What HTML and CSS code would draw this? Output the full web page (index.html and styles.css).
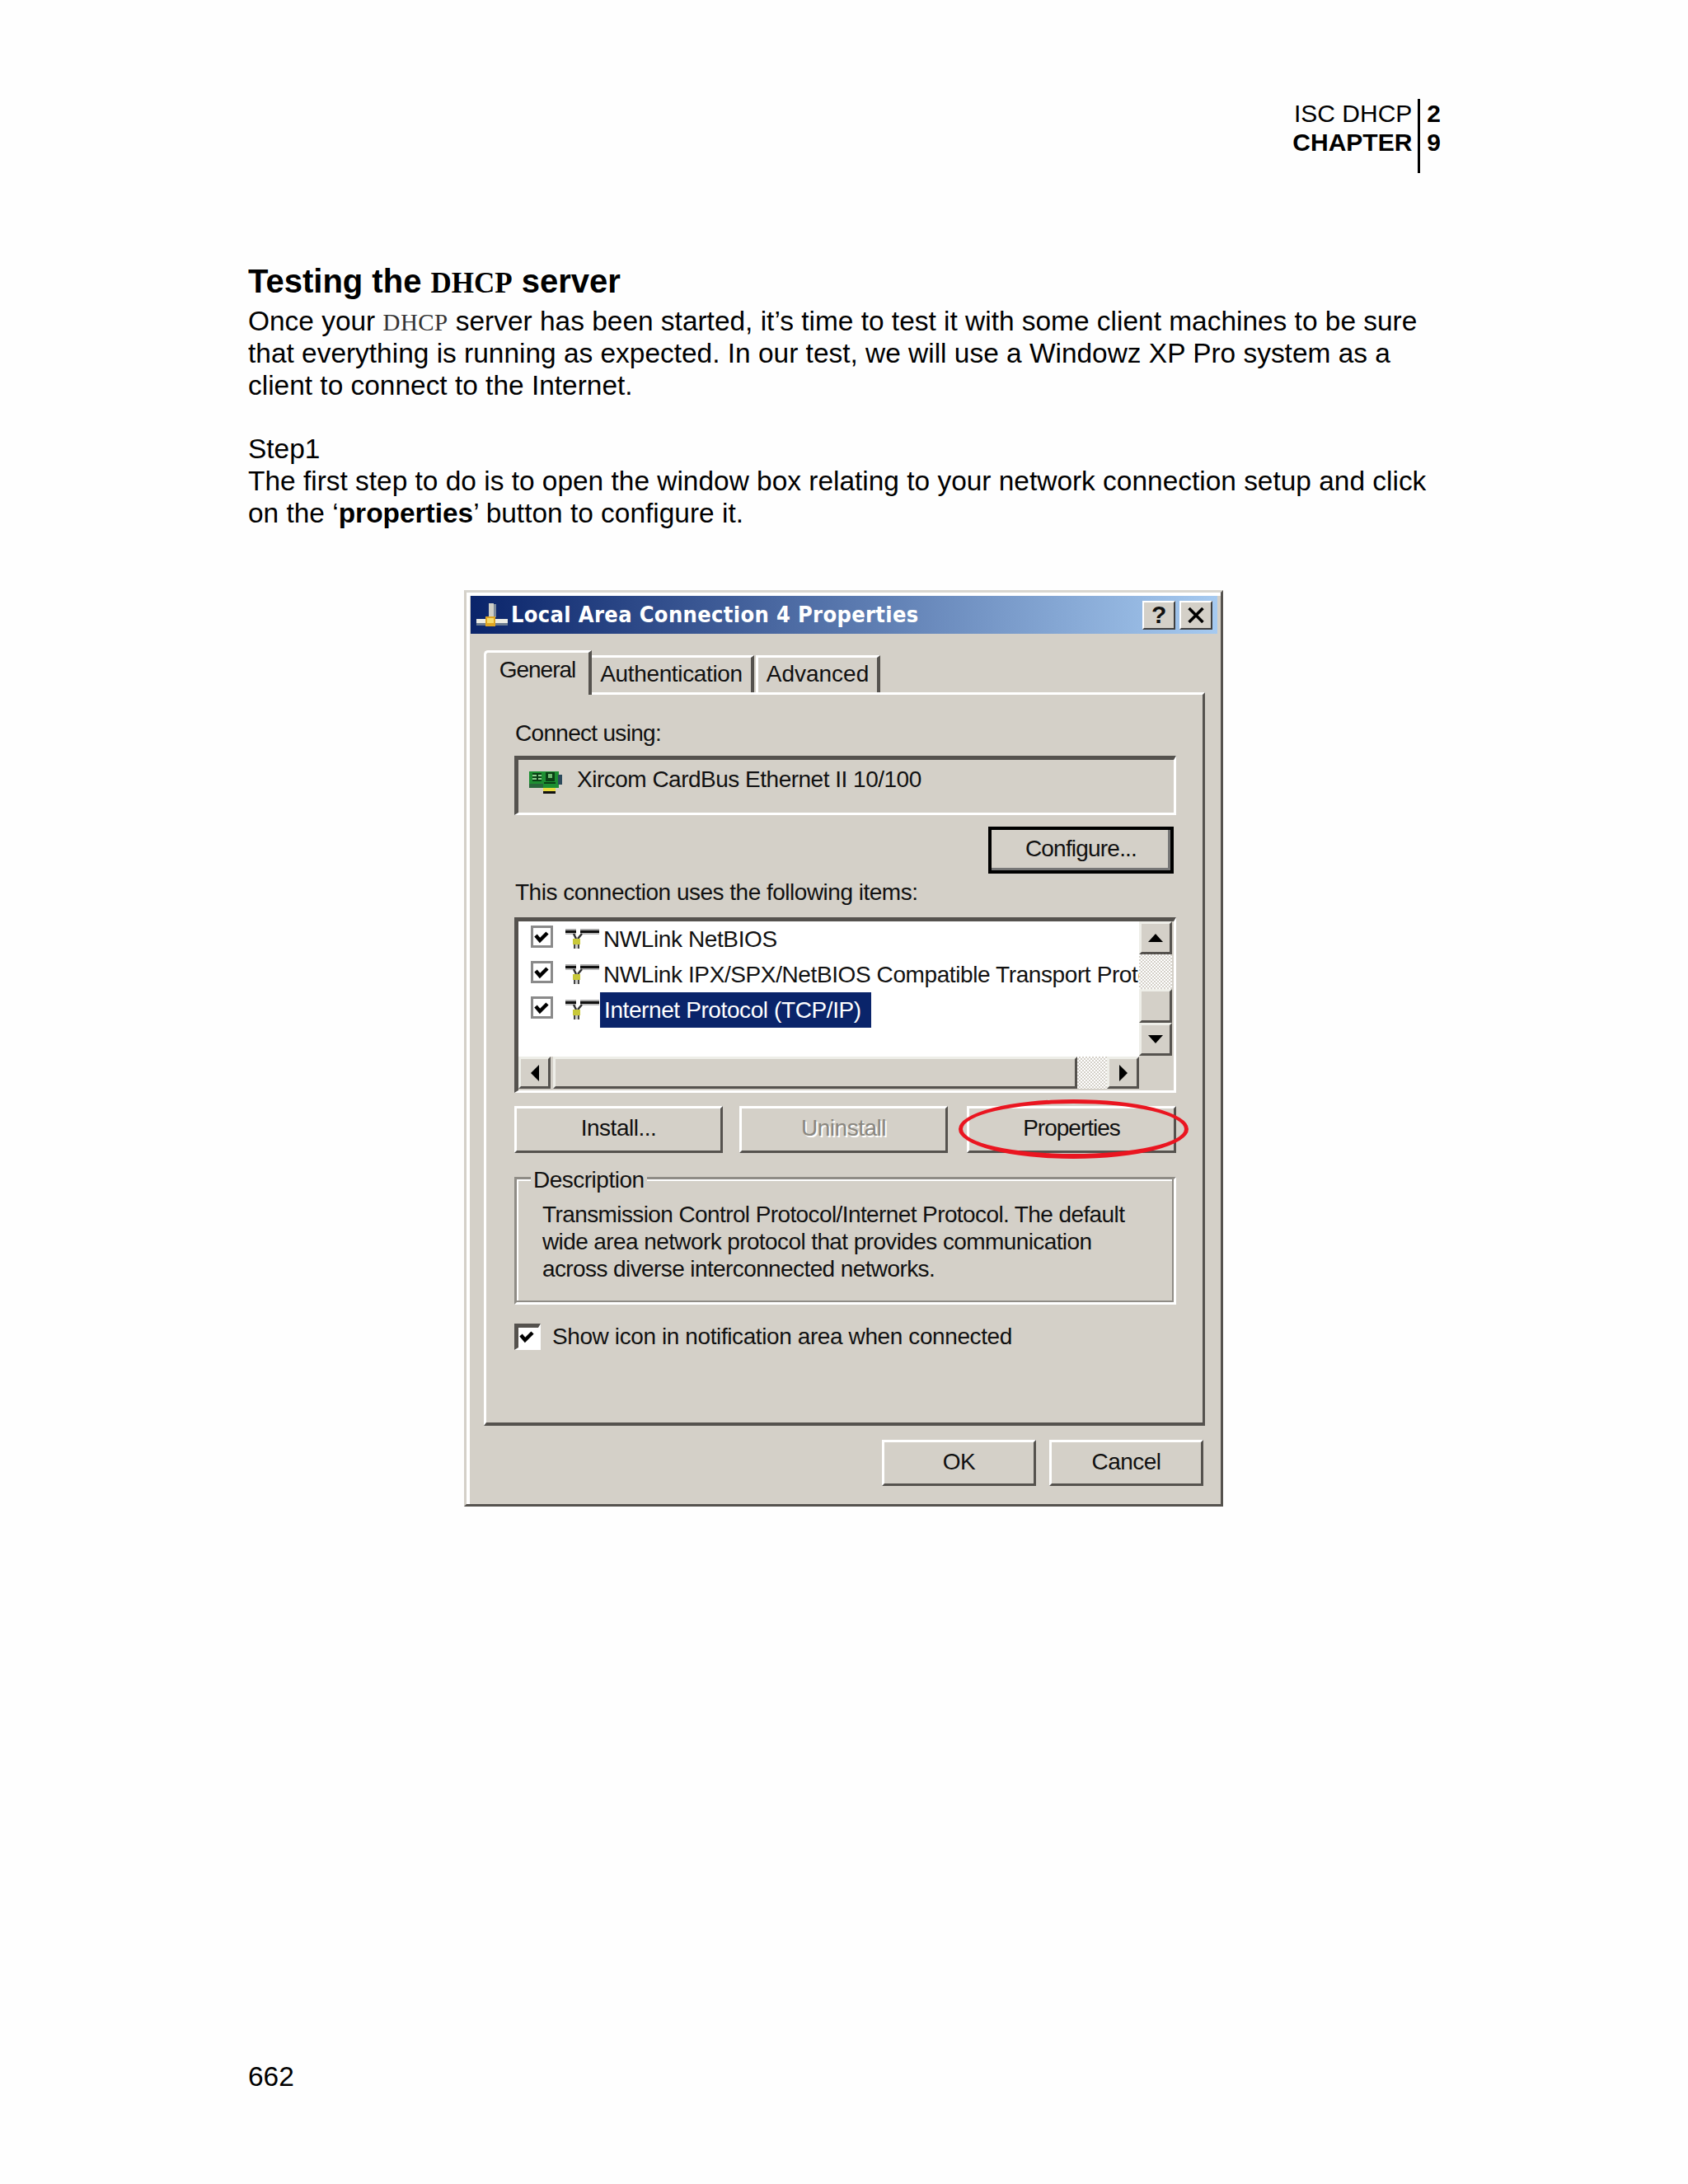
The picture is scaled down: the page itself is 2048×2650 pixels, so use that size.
FILE: index.html
```html
<!DOCTYPE html>
<html lang="en">
<head>
    <meta charset="UTF-8">
    <title>Testing the DHCP server</title>
    <link rel="stylesheet" href="styles.css">
</head>
<body>

<div class="page">
    <div class="running-head">
        <div class="head-titles">ISC DHCP<br><b>CHAPTER</b></div>
        <div class="head-bar"></div>
        <div class="head-nums"><b>2<br>9</b></div>
    </div>

    <h1>Testing the <code>DHCP</code> server</h1>
    <p>Once your <code>DHCP</code> server has been started, it&rsquo;s time to test it with some client machines to be sure<br>
    that everything is running as expected. In our test, we will use a Windowz XP Pro system as a<br>
    client to connect to the Internet.</p>
    <p class="step">Step1<br>
    The first step to do is to open the window box relating to your network connection setup and click<br>
    on the &lsquo;<b>properties</b>&rsquo; button to configure it.</p>

    <div class="dialog">
        <div class="titlebar">
            <svg class="title-icon" viewBox="0 0 42 32" shape-rendering="crispEdges">
                <rect x="23" y="1" width="3" height="16" fill="#7d8a9a"/>
                <rect x="17" y="0" width="6" height="17" fill="#cfcfc6"/>
                <rect x="2" y="24" width="38" height="3" fill="#6a7a90"/>
                <rect x="2" y="19" width="38" height="5" fill="#ecece4"/>
                <rect x="13" y="16" width="12" height="12" fill="#dfa522"/>
                <rect x="15" y="18" width="8" height="6" fill="#f8dc68"/>
            </svg>
            <span class="title-text">Local Area Connection 4 Properties</span>
            <div class="caption-btn">?</div>
            <div class="caption-btn close">
                <svg viewBox="0 0 20 18"><path d="M2 1 L18 17 M18 1 L2 17" stroke="#000" stroke-width="3.4" fill="none"/></svg>
            </div>
        </div>

        <div class="tabs">
            <div class="tab active">General</div>
            <div class="tab auth">Authentication</div>
            <div class="tab adv">Advanced</div>
        </div>

        <div class="panel">
            <div class="label connect-label">Connect using:</div>
            <div class="sunken adapter">
                <svg class="card-icon" viewBox="0 0 41 28" shape-rendering="crispEdges">
                    <rect x="1" y="1" width="36" height="20" fill="#1d8f32"/>
                    <rect x="1" y="16" width="17" height="5" fill="#27663a"/>
                    <rect x="5" y="3" width="11" height="2" fill="#0a4015"/>
                    <rect x="5" y="7" width="11" height="2" fill="#0a4015"/>
                    <rect x="5" y="11" width="11" height="2" fill="#0a4015"/>
                    <rect x="5" y="5" width="11" height="2" fill="#8fd090"/>
                    <rect x="5" y="9" width="11" height="2" fill="#8fd090"/>
                    <rect x="10" y="3" width="2" height="10" fill="#0a4015"/>
                    <rect x="21" y="2" width="11" height="11" fill="#0a4015"/>
                    <rect x="24" y="4" width="5" height="5" fill="#6dbb70"/>
                    <rect x="19" y="14" width="14" height="2" fill="#0a4015"/>
                    <rect x="36" y="5" width="5" height="12" fill="#2c4a5c"/>
                    <rect x="18" y="21" width="15" height="4" fill="#e8dc40"/>
                    <rect x="18" y="25" width="15" height="3" fill="#111"/>
                </svg>
                <span class="label">Xircom CardBus Ethernet II 10/100</span>
            </div>
            <div class="configure-row">
                <div class="btn default">Configure...</div>
            </div>
            <div class="label items-label">This connection uses the following items:</div>

            <div class="sunken listbox">
                <div class="list-main">
                    <div class="list-rows">
                        <div class="list-row">
                            <div class="checkbox"><svg viewBox="0 0 21 21"><path d="M3 9 L8 15 L17 6" stroke="#000" stroke-width="4.5" fill="none"/></svg></div>
                            <svg class="net-icon" viewBox="0 0 42 24"><use href="#net"/></svg>
                            <span class="item-text">NWLink NetBIOS</span>
                        </div>
                        <div class="list-row">
                            <div class="checkbox"><svg viewBox="0 0 21 21"><path d="M3 9 L8 15 L17 6" stroke="#000" stroke-width="4.5" fill="none"/></svg></div>
                            <svg class="net-icon" viewBox="0 0 42 24"><use href="#net"/></svg>
                            <span class="item-text">NWLink IPX/SPX/NetBIOS Compatible Transport Protocol</span>
                        </div>
                        <div class="list-row">
                            <div class="checkbox"><svg viewBox="0 0 21 21"><path d="M3 9 L8 15 L17 6" stroke="#000" stroke-width="4.5" fill="none"/></svg></div>
                            <svg class="net-icon" viewBox="0 0 42 24"><use href="#net"/></svg>
                            <span class="item-text selected">Internet Protocol (TCP/IP)</span>
                        </div>
                    </div>
                    <div class="hscroll">
                        <div class="sb-btn h"><svg viewBox="0 0 14 22"><path d="M12 1 V21 L2 11 Z"/></svg></div>
                        <div class="sb-thumb-h"></div>
                        <div class="sb-track-h"></div>
                        <div class="sb-btn h"><svg viewBox="0 0 14 22"><path d="M2 1 V21 L12 11 Z"/></svg></div>
                    </div>
                </div>
                <div class="vscroll">
                    <div class="sb-btn v"><svg viewBox="0 0 20 12"><path d="M1 11 H19 L10 1 Z"/></svg></div>
                    <div class="sb-track-v"></div>
                    <div class="sb-btn v thumb"></div>
                    <div class="sb-btn v"><svg viewBox="0 0 20 12"><path d="M1 1 H19 L10 11 Z"/></svg></div>
                </div>
            </div>

            <div class="action-row">
                <div class="btn">Install...</div>
                <div class="btn disabled">Uninstall</div>
                <div class="btn props">Properties
                    <div class="red-ring"></div>
                </div>
            </div>

            <div class="group">
                <span class="legend">Description</span>
                <div class="group-text">Transmission Control Protocol/Internet Protocol. The default<br>
                wide area network protocol that provides communication<br>
                across diverse interconnected networks.</div>
            </div>

            <div class="show-row">
                <div class="checkbox sunken-check"><svg viewBox="0 0 21 21"><path d="M3 9 L8 15 L17 6" stroke="#000" stroke-width="4.5" fill="none"/></svg></div>
                <span class="label show-label">Show icon in notification area when connected</span>
            </div>
        </div>

        <div class="dialog-buttons">
            <div class="btn">OK</div>
            <div class="btn">Cancel</div>
        </div>
    </div>

    <div class="page-number">662</div>
</div>

<svg class="defs" width="0" height="0">
    <defs>
        <g id="net" shape-rendering="crispEdges">
            <rect x="0" y="0" width="13" height="2" fill="#aaa"/>
            <rect x="0" y="2" width="13" height="3" fill="#111"/>
            <rect x="0" y="5" width="13" height="2" fill="#bbb"/>
            <rect x="18" y="0" width="23" height="2" fill="#aaa"/>
            <rect x="18" y="2" width="23" height="3" fill="#111"/>
            <rect x="18" y="5" width="23" height="2" fill="#bbb"/>
            <path d="M10 6 L13 12 M20 6 L15 12" stroke="#333" stroke-width="2.5" fill="none" shape-rendering="auto"/>
            <rect x="9" y="12" width="9" height="7" fill="#c8c83a"/>
            <rect x="10" y="19" width="2" height="5" fill="#444"/>
            <rect x="12" y="19" width="3" height="5" fill="#ccc"/>
            <rect x="15" y="19" width="2" height="5" fill="#444"/>
        </g>
    </defs>
</svg>

</body>
</html>
```

FILE: styles.css
```css
body {
    margin: 0;
    background-color: #fefefe;
    font-family: "Liberation Sans", Arial, sans-serif;
    color: #000;
}
.page {
    box-sizing: border-box;
    width: 2048px;
    height: 2650px;
    padding: 120px 0 0 301px;
    font-size: 33.45px;
    line-height: 39px;
}
.defs {
    position: absolute;
}

/* running head */
.running-head {
    display: flex;
    justify-content: flex-end;
    height: 90px;
    padding-right: 300px;
    font-size: 30px;
    line-height: 35px;
}
.head-titles {
    text-align: right;
}
.head-bar {
    width: 3px;
    background: #000;
    margin: 0 8px 0 7px;
}

h1 {
    margin: 108px 0 0 0;
    font-size: 40px;
    line-height: 46px;
    font-weight: bold;
}
h1 code {
    font-family: "Liberation Serif", serif;
    font-size: 35px;
    line-height: 0;
}
p {
    margin: 6px 0 0 0;
}
p code {
    font-family: "Liberation Serif", serif;
    font-size: 29px;
    letter-spacing: 0.4px;
    line-height: 0;
    color: #333;
}
.step {
    margin-top: 38px;
}

/* dialog */
.dialog {
    box-sizing: border-box;
    width: 921px;
    height: 1112px;
    margin: 74px 0 0 262px;
    padding: 4px 0 0 5px;
    background: #d4d0c8;
    border: 3px solid;
    border-color: #d8d6d0 #55524e #55524e #d4d0c8;
    box-shadow: inset 4px 4px 0 #fff;
    font-size: 28px;
    line-height: 34px;
    letter-spacing: -0.5px;
    color: #111;
}
.titlebar {
    display: flex;
    align-items: center;
    height: 46px;
    margin-right: 4px;
    padding: 0 6px 0 5px;
    background: linear-gradient(90deg, #0a246a, #a6caf0);
}
.title-icon {
    width: 42px;
    height: 32px;
    margin-top: 4px;
}
.title-text {
    flex: 1;
    margin-left: 2px;
    color: #fff;
    font-family: "DejaVu Sans Condensed", "DejaVu Sans", sans-serif;
    font-weight: bold;
    font-size: 27px;
    letter-spacing: 0.35px;
}
.caption-btn {
    box-sizing: border-box;
    display: flex;
    align-items: center;
    justify-content: center;
    width: 40px;
    height: 35px;
    margin-left: 5px;
    background: #d4d0c8;
    border: 2px solid;
    border-color: #fff #404040 #404040 #fff;
    font-weight: bold;
    font-size: 30px;
}
.caption-btn svg {
    width: 22px;
    height: 19px;
}

/* tabs */
.tabs {
    display: flex;
    align-items: flex-end;
    height: 71px;
    margin-left: 16px;
}
.tab {
    box-sizing: border-box;
    height: 45px;
    padding: 3px 0 0 0;
    text-align: center;
    border-top: 3px solid #fff;
    border-left: 3px solid #fff;
    border-right: 4px solid #55524e;
}
.tab.active {
    position: relative;
    z-index: 1;
    width: 131px;
    height: 54px;
    margin-bottom: -3px;
    padding-top: 4px;
    border-top-left-radius: 5px;
    background: #d4d0c8;
    letter-spacing: -1px;
}
.tab.auth {
    width: 197px;
    border-left: none;
    letter-spacing: -0.35px;
}
.tab.adv {
    width: 151px;
    margin-left: 2px;
    letter-spacing: 0;
}

.panel {
    box-sizing: border-box;
    width: 875px;
    height: 890px;
    margin-left: 16px;
    padding: 30px 32px 0 34px;
    border: 3px solid;
    border-color: #fff #55524e #55524e #fff;
    border-bottom-width: 4px;
}
.label {
    white-space: nowrap;
}
.connect-label {
    height: 44px;
    padding-left: 1px;
    letter-spacing: -0.7px;
}
.sunken {
    box-sizing: border-box;
    border: 3px solid;
    border-color: #55524e #fff #fff #55524e;
    border-top-width: 5px;
    border-left-width: 5px;
}
.adapter {
    display: flex;
    align-items: flex-start;
    width: 803px;
    height: 72px;
    padding: 7px 0 0 12px;
}
.card-icon {
    width: 41px;
    height: 28px;
    margin: 6px 18px 0 0;
}
.configure-row {
    display: flex;
    justify-content: flex-end;
    margin: 14px 3px 0 0;
}
.btn {
    box-sizing: border-box;
    display: flex;
    align-items: center;
    justify-content: center;
    height: 57px;
    padding-bottom: 3px;
    background: #d4d0c8;
    border: 3px solid;
    border-color: #fff #55524e #55524e #fff;
}
.btn.default {
    width: 225px;
    border: 4px solid #000;
    box-shadow: inset -3px -3px 0 #777;
    letter-spacing: -0.8px;
}
.items-label {
    margin-top: 6px;
    height: 47px;
    padding-left: 1px;
}

/* list box */
.listbox {
    display: flex;
    width: 803px;
    height: 213px;
}
.list-main {
    width: 753px;
}
.list-rows {
    box-sizing: border-box;
    height: 164px;
    padding: 5px 0 0 15px;
    background: #fff;
    overflow: hidden;
}
.list-row {
    display: flex;
    align-items: flex-start;
    height: 43px;
    white-space: nowrap;
}
.checkbox {
    box-sizing: border-box;
    width: 27px;
    height: 27px;
    border: 3px solid #8a8a8a;
    background: #fff;
    flex: none;
}
.checkbox svg {
    display: block;
    width: 21px;
    height: 21px;
}
.net-icon {
    flex: none;
    width: 42px;
    height: 24px;
    margin: 4px 0 0 15px;
}
.item-text {
    margin-left: 4px;
    padding: 0;
    letter-spacing: -0.4px;
}
.item-text.selected {
    margin-left: 0;
    padding: 0 12px 0 5px;
    height: 43px;
    margin-top: -5px;
    line-height: 43px;
    background: #0a246a;
    color: #fff;
}
.hscroll {
    display: flex;
    height: 39px;
    background: #d4d0c8;
}
.sb-btn {
    box-sizing: border-box;
    display: flex;
    align-items: center;
    justify-content: center;
    flex: none;
    background: #d4d0c8;
    border: 3px solid;
    border-color: #eeeee8 #55524e #55524e #eeeee8;
}
.sb-btn.h {
    width: 39px;
    height: 39px;
}
.sb-btn.h svg {
    width: 14px;
    height: 22px;
}
.sb-btn.v {
    width: 40px;
    height: 40px;
}
.sb-btn.v svg {
    width: 20px;
    height: 12px;
}
.sb-btn.thumb {
    height: 41px;
}
.sb-thumb-h {
    box-sizing: border-box;
    width: 636px;
    margin-left: 3px;
    border: 3px solid;
    border-color: #eeeee8 #55524e #55524e #eeeee8;
}
.sb-track-h, .sb-track-v {
    flex: 1;
    background-color: #e6e4de;
    background-image: repeating-conic-gradient(#d4d0c8 0% 25%, #fff 0% 50%);
    background-size: 4px 4px;
}
.vscroll {
    display: flex;
    flex-direction: column;
    width: 40px;
    height: 163px;
}

/* action buttons */
.action-row {
    display: grid;
    grid-template-columns: 253px 253px 254px;
    column-gap: 20px;
    width: 803px;
    margin-top: 16px;
}
.btn.disabled {
    color: #8a8780;
    text-shadow: 2px 2px 0 #fff;
}
.btn.props {
    position: relative;
    margin-left: 3px;
    width: 254px;
    letter-spacing: -1px;
}
.red-ring {
    position: absolute;
    left: -13px;
    top: -11px;
    width: 279px;
    height: 72px;
    box-sizing: border-box;
    border: 5px solid #ea1520;
    border-bottom-width: 6px;
    border-radius: 50%;
}

/* description box */
.group {
    position: relative;
    box-sizing: border-box;
    width: 803px;
    height: 155px;
    margin-top: 29px;
    padding: 26px 0 0 31px;
    border: 3px solid;
    border-color: #8f8c86 #fff #fff #8f8c86;
    box-shadow: inset -2px -2px 0 #8f8c86, inset 2px 2px 0 #fff;
}
.legend {
    position: absolute;
    left: 17px;
    top: -16px;
    padding: 0 3px;
    background: #d4d0c8;
}
.group-text {
    line-height: 33px;
    white-space: nowrap;
    letter-spacing: -0.6px;
}

.show-row {
    display: flex;
    align-items: center;
    gap: 14px;
    margin-top: 22px;
}
.show-label {
    letter-spacing: -0.4px;
}
.sunken-check {
    width: 32px;
    height: 32px;
    padding: 0;
    border-style: solid;
    border-width: 5px 3px 3px 5px;
    border-color: #55524e #fff #fff #55524e;
}
.sunken-check svg {
    width: 21px;
    height: 21px;
}

.dialog-buttons {
    display: flex;
    justify-content: flex-end;
    gap: 16px;
    margin: 17px 21px 0 0;
}
.dialog-buttons .btn {
    width: 187px;
    height: 56px;
}

.page-number {
    margin-top: 672px;
}
```
